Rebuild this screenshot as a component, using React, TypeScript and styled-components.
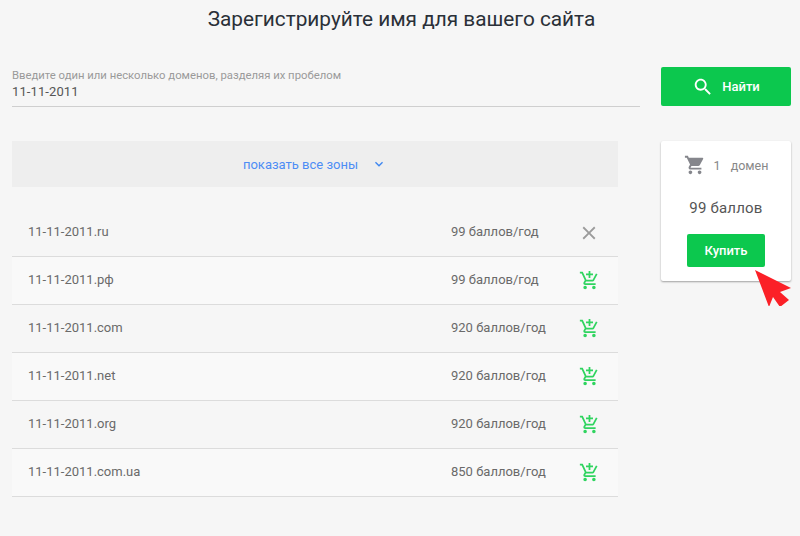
import React, { FC } from 'react';
import styled, { createGlobalStyle } from 'styled-components';

const GlobalStyle = createGlobalStyle`
  html, body {
    margin: 0;
    padding: 0;
    background: #f6f6f6;
    font-family: Roboto, "Liberation Sans", sans-serif;
  }
`;

const Page = styled.div`
  width: 800px;
  height: 536px;
  overflow: hidden;
  box-sizing: border-box;
  padding: 6px 9px 0 12px;
`;

const Title = styled.h1`
  margin: 0 0 34px;
  height: 27px;
  line-height: 27px;
  text-align: center;
  font-size: 20.8px;
  font-weight: 400;
  color: #2a3038;
`;

const SearchRow = styled.div`
  display: flex;
  align-items: flex-start;
  justify-content: space-between;
`;

const Field = styled.label`
  display: block;
  width: 628px;
  height: 40px;
  box-sizing: border-box;
  padding-top: 2px;
  border-bottom: 1px solid #cfcfcf;
`;

const FieldLabel = styled.div`
  font-size: 11.3px;
  line-height: 13px;
  color: #9a9a9a;
`;

const FieldValue = styled.div`
  margin-top: 1px;
  font-size: 13px;
  line-height: 18px;
  letter-spacing: 0.1px;
  color: #555;
`;

const GreenButton = styled.button<{ $wide?: boolean }>`
  display: flex;
  align-items: center;
  justify-content: center;
  gap: 8px;
  width: ${(p) => (p.$wide ? '130px' : '78px')};
  height: ${(p) => (p.$wide ? '39px' : '33px')};
  margin: ${(p) => (p.$wide ? '0' : '0 auto')};
  padding: 0;
  border: 0;
  border-radius: 2px;
  background: #0cc84e;
  color: #fff;
  font-family: inherit;
  font-size: 13px;
  font-weight: 500;
`;

const Content = styled.div`
  display: flex;
  justify-content: space-between;
  align-items: flex-start;
  margin-top: 34px;
`;

const Results = styled.div`
  width: 606px;
`;

const ZonesBar = styled.div`
  display: flex;
  align-items: center;
  justify-content: center;
  gap: 13px;
  height: 46px;
  margin-bottom: 22px;
  background: #eeeeee;
  color: #4d8df5;
  font-size: 13px;
`;

const Row = styled.div<{ $light?: boolean }>`
  display: flex;
  align-items: center;
  height: 48px;
  box-sizing: border-box;
  padding: 0 15px 0 16px;
  border-bottom: 1px solid #dcdcdc;
  background: ${(p) => (p.$light ? '#f9f9f9' : 'transparent')};
  color: #6a6a6a;
  font-size: 13px;
`;

const DomainName = styled.span`
  flex: 1;
  padding-bottom: 2px;
`;

const Price = styled.span`
  width: 124px;
  padding-bottom: 2px;
`;

const RowIcon = styled.span`
  display: flex;
  justify-content: center;
  width: 28px;
`;

const Card = styled.div`
  position: relative;
  width: 130px;
  height: 140px;
  box-sizing: border-box;
  padding-top: 13px;
  background: #fff;
  border-radius: 2px;
  box-shadow: 0 1px 2px rgba(0, 0, 0, 0.35);
  text-align: center;
`;

const CartLine = styled.div`
  display: flex;
  align-items: center;
  justify-content: center;
  height: 22px;
  color: #888;
  font-size: 12.5px;
`;

const CartCount = styled.span`
  margin: 0 10px 0 8px;
`;

const CartTotal = styled.div`
  margin: 22px 0 16px;
  font-size: 15px;
  line-height: 20px;
  letter-spacing: 0.2px;
  color: #555;
`;

const Pointer = styled.svg`
  position: absolute;
  left: 90px;
  top: 125px;
`;

const paths = {
  search:
    'M15.5 14h-.79l-.28-.27C15.41 12.59 16 11.11 16 9.5 16 5.91 13.09 3 9.5 3S3 5.91 3 9.5 5.91 16 9.5 16c1.61 0 3.09-.59 4.23-1.57l.27.28v.79l5 4.99L20.49 19l-4.99-5zm-6 0C7.01 14 5 11.99 5 9.5S7.01 5 9.5 5 14 7.01 14 9.5 11.99 14 9.5 14z',
  close:
    'M19 6.41L17.59 5 12 10.59 6.41 5 5 6.41 10.59 12 5 17.59 6.41 19 12 13.41 17.59 19 19 17.59 13.41 12z',
  expand: 'M16.59 8.59L12 13.17 7.41 8.59 6 10l6 6 6-6z',
  cart:
    'M7 18c-1.1 0-1.99.9-1.99 2S5.9 22 7 22s2-.9 2-2-.9-2-2-2zM1 2v2h2l3.6 7.59-1.35 2.45c-.16.28-.25.61-.25.96 0 1.1.9 2 2 2h12v-2H7.42c-.14 0-.25-.11-.25-.25l.03-.12.9-1.63h7.45c.75 0 1.41-.41 1.75-1.03l3.58-6.49c.08-.14.12-.31.12-.48 0-.55-.45-1-1-1H5.21l-.94-2H1zm16 16c-1.1 0-1.99.9-1.99 2s.89 2 1.99 2 2-.9 2-2-.9-2-2-2z',
  addCart:
    'M11 9h2V6h3V4h-3V1h-2v3H8v2h3v3zm-4 9c-1.1 0-1.99.9-1.99 2S5.9 22 7 22s2-.9 2-2-.9-2-2-2zm10 0c-1.1 0-1.99.9-1.99 2s.89 2 1.99 2 2-.9 2-2-.9-2-2-2zm-9.83-3.25l.03-.12.9-1.63h7.45c.75 0 1.41-.41 1.75-1.03l3.86-7.01L19.42 4h-.01l-1.1 2-2.76 5H8.53l-.13-.27L6.16 6l-.95-2-.94-2H1v2h2l3.6 7.59-1.35 2.45c-.16.28-.25.61-.25.96 0 1.1.9 2 2 2h12v-2H7.42c-.13 0-.25-.11-.25-.25z',
};

const Icon: FC<{ name: keyof typeof paths; size: number; color: string }> = ({ name, size, color }) => (
  <svg width={size} height={size} viewBox="0 0 24 24" fill={color}>
    <path d={paths[name]} />
  </svg>
);

const domains = [
  { name: '11-11-2011.ru', price: '99 баллов/год', inCart: true },
  { name: '11-11-2011.рф', price: '99 баллов/год' },
  { name: '11-11-2011.com', price: '920 баллов/год' },
  { name: '11-11-2011.net', price: '920 баллов/год' },
  { name: '11-11-2011.org', price: '920 баллов/год' },
  { name: '11-11-2011.com.ua', price: '850 баллов/год' },
];

const App: FC = () => (
  <Page>
    <GlobalStyle />
    <Title>Зарегистрируйте имя для вашего сайта</Title>
    <SearchRow>
      <Field>
        <FieldLabel>Введите один или несколько доменов, разделяя их пробелом</FieldLabel>
        <FieldValue>11-11-2011</FieldValue>
      </Field>
      <GreenButton $wide>
        <Icon name="search" size={22} color="#fff" />
        Найти
      </GreenButton>
    </SearchRow>
    <Content>
      <Results>
        <ZonesBar>
          показать все зоны
          <Icon name="expand" size={16} color="#3d86f0" />
        </ZonesBar>
        {domains.map((domain, index) => (
          <Row key={domain.name} $light={index % 2 === 1}>
            <DomainName>{domain.name}</DomainName>
            <Price>{domain.price}</Price>
            <RowIcon>
              {domain.inCart ? (
                <Icon name="close" size={22} color="#9b9b9b" />
              ) : (
                <Icon name="addCart" size={21} color="#2fd45f" />
              )}
            </RowIcon>
          </Row>
        ))}
      </Results>
      <Card>
        <CartLine>
          <Icon name="cart" size={22} color="#85868c" />
          <CartCount>1</CartCount>
          домен
        </CartLine>
        <CartTotal>99 баллов</CartTotal>
        <GreenButton>Купить</GreenButton>
        <Pointer width="40" height="40" viewBox="0 0 40 40">
          <polygon points="4,4 40,22 29,26 38,34 29,41 22,31 18,41" fill="#fb2027" />
        </Pointer>
      </Card>
    </Content>
  </Page>
);

export default App;
